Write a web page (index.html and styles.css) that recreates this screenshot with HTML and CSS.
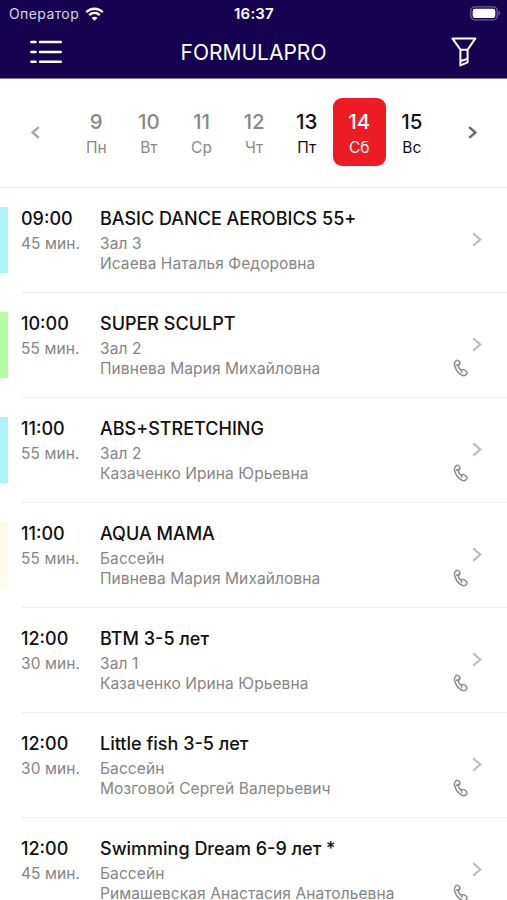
FILE: index.html
```html
<!DOCTYPE html>
<html lang="ru">
<head>
    <meta charset="UTF-8">
    <meta name="viewport" content="width=device-width, initial-scale=1.0">
    <title>FORMULAPRO</title>
    <link rel="stylesheet" href="styles.css">
</head>
<body>
    <svg width="0" height="0" class="sprite">
        <symbol id="chevron" viewBox="0 0 12 18">
            <path d="M2 2.5L9.5 9L2 15.5" fill="none" stroke="currentColor"/>
        </symbol>
        <symbol id="phone" viewBox="0 0 16 18">
            <path d="M2.4 2.4C3.5 1 5.6 1 6.5 2.6C7.3 4.2 7 5.3 5.8 6.2C5 7 5.2 7.6 6 9C7 10.6 7.8 11.1 8.9 10.8C10.4 10.3 11.5 10.6 13 12C14.5 13.4 14.4 14.8 12.9 15.9C11 17.2 8.6 16.7 6.2 14.4C3.9 12.3 2.5 9.9 1.8 7.2C1.2 5.1 1.4 3.6 2.4 2.4Z M6.2 5.8C5 5.4 3.8 5.9 3.3 7 M8.9 10.8C8.2 11.6 8.3 12.8 9.1 13.7" fill="none" stroke="currentColor" stroke-width="1.5"/>
        </symbol>
    </svg>
    <header class="header">
        <div class="status">
            <div class="carrier">
                <span>Оператор</span>
                <svg class="wifi" width="19" height="14" viewBox="0 0 19 14">
                    <path d="M1.2 5.2C6 0.6 13 0.6 17.8 5.2M4.2 8.2C7.3 5.3 11.7 5.3 14.8 8.2" fill="none" stroke="#fff" stroke-width="2.4"/>
                    <path d="M9.5 13.8L6.6 10.9C8.2 9.4 10.8 9.4 12.4 10.9Z" fill="#fff"/>
                </svg>
            </div>
            <div class="clock">16:37</div>
            <svg class="battery" width="31" height="15" viewBox="0 0 31 15">
                <rect x="0.8" y="0.8" width="26.4" height="13" rx="4" fill="none" stroke="#6c629b" stroke-width="1.3"/>
                <rect x="2.7" y="2.7" width="22.6" height="9.2" rx="2.2" fill="#fff"/>
                <path d="M28.5 5V9.6C30.4 9 30.4 5.6 28.5 5Z" fill="#6c629b"/>
            </svg>
        </div>
        <div class="navbar">
            <svg width="32" height="24" viewBox="0 0 32 24">
                <path d="M1.3 2H5.6M10 2H30.8M1.3 12H5.6M10 12H30.8M1.3 21.7H5.6M10 21.7H30.8" stroke="#fff" stroke-width="2.4" stroke-linecap="round"/>
            </svg>
            <h1 class="title">FORMULAPRO</h1>
            <svg width="26" height="30" viewBox="0 0 26 30">
                <path d="M1.4 1.4H24.4L16.6 12.7V25.3L9.4 28.4V12.7Z M9.4 12.7H16.6 M9.4 24.3L16.6 21.8" fill="none" stroke="#fff" stroke-width="2" stroke-linejoin="round"/>
            </svg>
        </div>
    </header>
    <nav class="week">
        <svg class="arrow prev" viewBox="0 0 12 18"><use href="#chevron"/></svg>
        <div class="days">
            <div class="day past"><b>9</b><span>Пн</span></div>
            <div class="day past"><b>10</b><span>Вт</span></div>
            <div class="day past"><b>11</b><span>Ср</span></div>
            <div class="day past"><b>12</b><span>Чт</span></div>
            <div class="day"><b>13</b><span>Пт</span></div>
            <div class="day active"><b>14</b><span>Сб</span></div>
            <div class="day"><b>15</b><span>Вс</span></div>
        </div>
        <svg class="arrow next" viewBox="0 0 12 18"><use href="#chevron"/></svg>
    </nav>
    <main class="schedule" id="schedule"></main>
    <script>
        const lessons = [
            { time: '09:00', length: 45, name: 'BASIC DANCE AEROBICS 55+', room: 'Зал 3', trainer: 'Исаева Наталья Федоровна', color: 'blue', phone: false },
            { time: '10:00', length: 55, name: 'SUPER SCULPT', room: 'Зал 2', trainer: 'Пивнева Мария Михайловна', color: 'green', phone: true },
            { time: '11:00', length: 55, name: 'ABS+STRETCHING', room: 'Зал 2', trainer: 'Казаченко Ирина Юрьевна', color: 'blue', phone: true },
            { time: '11:00', length: 55, name: 'AQUA MAMA', room: 'Бассейн', trainer: 'Пивнева Мария Михайловна', color: 'cream', phone: true },
            { time: '12:00', length: 30, name: 'BTM 3-5 лет', room: 'Зал 1', trainer: 'Казаченко Ирина Юрьевна', color: 'none', phone: true },
            { time: '12:00', length: 30, name: 'Little fish 3-5 лет', room: 'Бассейн', trainer: 'Мозговой Сергей Валерьевич', color: 'none', phone: true },
            { time: '12:00', length: 45, name: 'Swimming Dream 6-9 лет *', room: 'Бассейн', trainer: 'Римашевская Анастасия Анатольевна', color: 'none', phone: true }
        ];

        document.getElementById('schedule').innerHTML = lessons.map(lesson => `
            <article class="lesson">
                <div class="mark ${lesson.color}"></div>
                <div class="body">
                    <div class="when">
                        <div class="time">${lesson.time}</div>
                        <div class="text">${lesson.length} мин.</div>
                    </div>
                    <div class="info">
                        <div class="name">${lesson.name}</div>
                        <div class="text">${lesson.room}</div>
                        <div class="text">${lesson.trainer}</div>
                    </div>
                    <div class="actions">
                        <svg class="open" viewBox="0 0 12 18"><use href="#chevron"/></svg>
                        ${lesson.phone ? '<svg class="phone" viewBox="0 0 16 18"><use href="#phone"/></svg>' : ''}
                    </div>
                </div>
            </article>`).join('');
    </script>
</body>
</html>
```
FILE: styles.css
```css
* {
    box-sizing: border-box;
}
body {
    margin: 0;
    height: 900px;
    overflow: hidden;
    background: #fff;
    color: #111;
    font-family: Inter, sans-serif;
}
svg {
    display: block;
    flex: none;
}
.sprite {
    position: absolute;
}
.header {
    height: 79px;
    background: #150350;
    border-bottom: 1px solid #8178a8;
    color: #fff;
}
.status {
    display: grid;
    grid-template-columns: 1fr auto 1fr;
    align-items: center;
    height: 27px;
    padding: 0 6px 0 9px;
}
.carrier {
    display: flex;
    align-items: center;
    gap: 6px;
    font-size: 14px;
    line-height: 27px;
    color: #d9d5e8;
}
.carrier span {
    letter-spacing: 0.4px;
}
.clock {
    margin-right: 2px;
    font-size: 15px;
    font-weight: 600;
    letter-spacing: 0.2px;
}
.battery {
    justify-self: end;
}
.navbar {
    display: flex;
    justify-content: space-between;
    align-items: center;
    height: 50px;
    padding: 0 30px;
}
.title {
    margin: 0 6px 0 0;
    font-size: 21px;
    font-weight: 400;
}
.week {
    display: flex;
    align-items: center;
    height: 109px;
    padding: 0 29px 2px 30px;
    border-bottom: 1px solid #efefef;
}
.arrow {
    width: 11px;
    height: 15px;
    stroke-width: 2.8;
}
.prev {
    color: #a5a5a5;
    transform: scaleX(-1);
}
.next {
    color: #666;
}
.days {
    display: flex;
    margin: 0 auto 0 29px;
}
.day {
    display: flex;
    flex-direction: column;
    align-items: center;
    width: 52.6px;
    height: 68px;
    padding-top: 11px;
    border-radius: 9px;
}
.day b {
    font-size: 20.5px;
    line-height: 26px;
    font-weight: 500;
}
.day span {
    font-size: 15.5px;
    line-height: 25px;
}
.past {
    color: #888;
}
.active {
    background: #ed1c24;
    color: #fff;
}
.lesson {
    display: flex;
    height: 105px;
}
.mark {
    width: 8px;
    height: 66px;
    margin: 19px 13px 0 0;
}
.blue {
    background: #aef3fb;
}
.green {
    background: #b5fb9f;
}
.cream {
    background: #fffbea;
}
.body {
    display: flex;
    flex: 1;
    padding-top: 19px;
    border-bottom: 1px solid #efefef;
}
.when {
    width: 79px;
}
.info {
    flex: 1;
    white-space: nowrap;
}
.time,
.name {
    font-size: 18px;
    line-height: 23px;
    margin-bottom: 4px;
    font-weight: 500;
}
.text {
    font-size: 15.5px;
    line-height: 19.5px;
    letter-spacing: 0.09px;
    color: #858585;
}
.actions {
    display: flex;
    flex-direction: column;
    gap: 6px;
    width: 55px;
    padding-top: 24px;
}
.open {
    width: 12px;
    height: 17px;
    margin-left: 19px;
    color: #bcbcbc;
    stroke-width: 2.2;
}
.phone {
    width: 16px;
    height: 18px;
    margin-left: 1px;
    color: #8c8c8c;
}
```
